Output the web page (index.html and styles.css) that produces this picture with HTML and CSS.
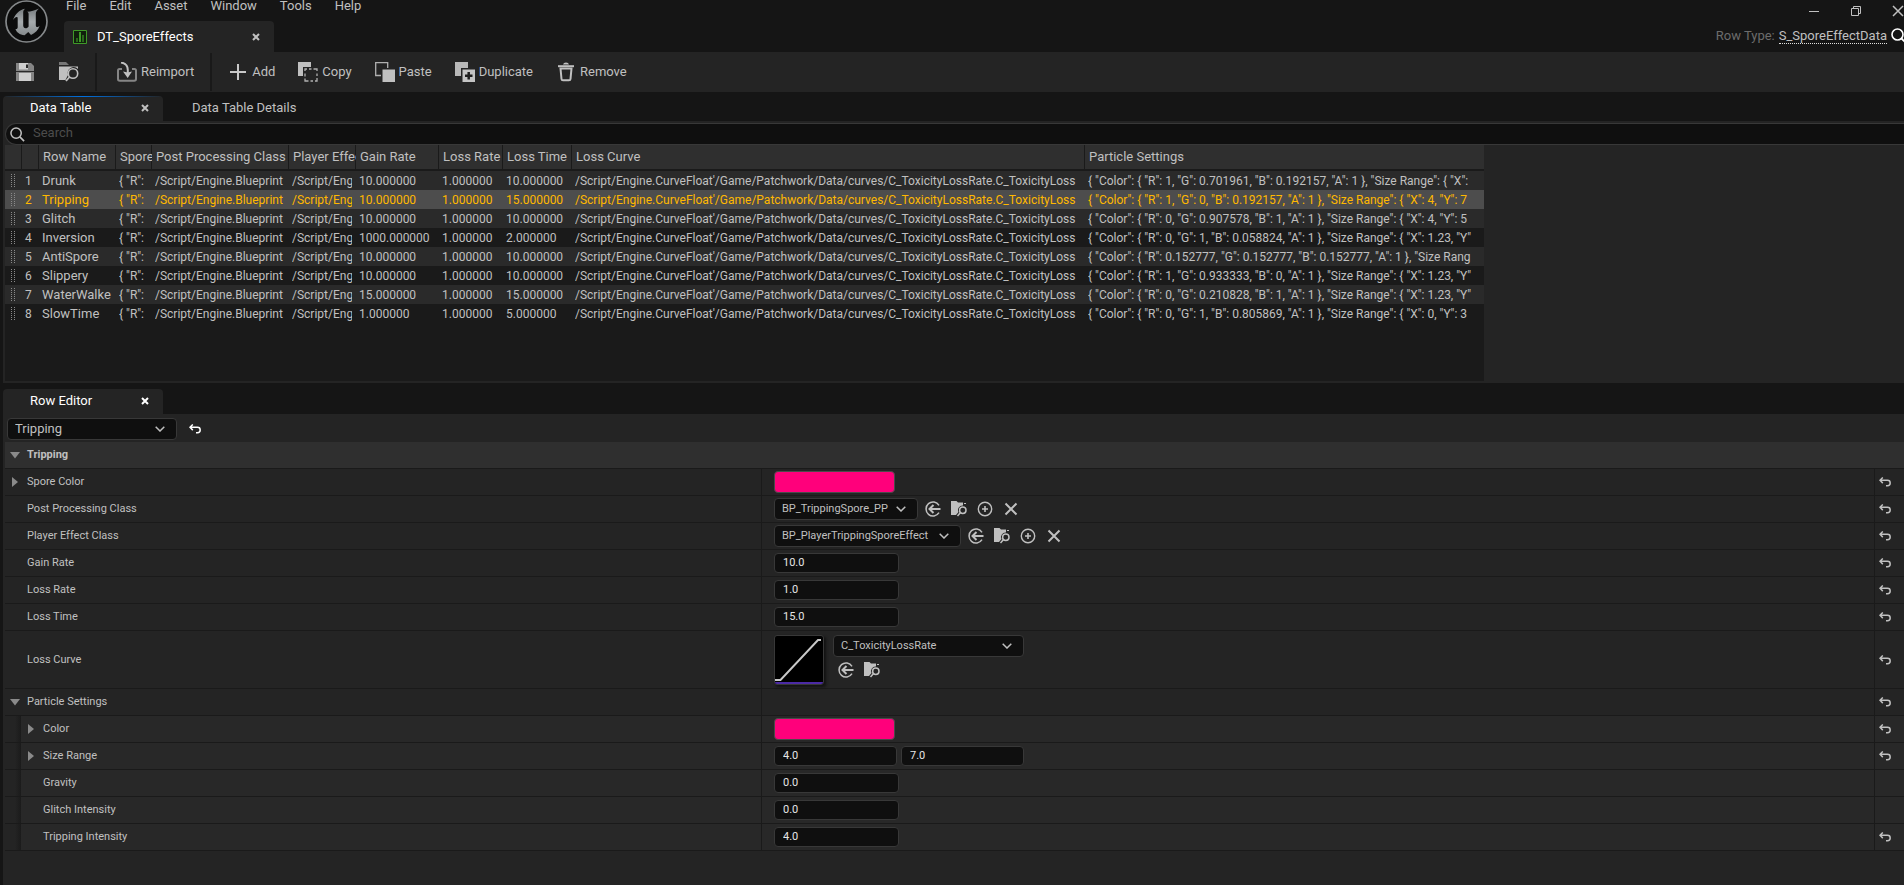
FILE: index.html
```html
<!DOCTYPE html>
<html lang="en">
<head>
<meta charset="utf-8">
<title>DT_SporeEffects</title>
<link rel="stylesheet" href="styles.css">
</head>
<body>
<svg class="sprite" aria-hidden="true">
  <symbol id="i-close" viewBox="0 0 8 8"><path d="M1 1l6 6M7 1l-6 6" fill="none" stroke="currentColor" stroke-width="2"/></symbol>
  <symbol id="i-chevron" viewBox="0 0 10 6"><path d="M.7.7L5 5 9.300.7" fill="none" stroke="currentColor" stroke-width="1.5"/></symbol>
  <symbol id="i-search" viewBox="0 0 16 16"><circle cx="6.500" cy="6.500" r="5.500" fill="none" stroke="currentColor" stroke-width="1.600"/><path d="M10.500 10.500l4.500 4.500" stroke="currentColor" stroke-width="1.800"/></symbol>
  <symbol id="i-reset" viewBox="0 0 12 10"><path d="M3.800.5L1 3.300l2.800 2.800M1.200 3.300H8.500a2.700 2.700 0 0 1 0 5.400H7" fill="none" stroke="currentColor" stroke-width="1.500"/></symbol>
  <symbol id="i-use" viewBox="0 0 16 16"><path d="M14 4.300A7 7 0 1 0 14 11.700" fill="none" stroke="currentColor" stroke-width="1.500"/><path d="M15.500 8H5M8.500 4L4.500 8l4 4" fill="none" stroke="currentColor" stroke-width="2"/></symbol>
  <symbol id="i-browse" viewBox="0 0 16 16"><path d="M0 0h5.500l1.500 1.500H12V4.500A4.500 4.500 0 0 0 7.500 11L5 14H0z" fill="currentColor"/><path d="M13 2h2v1h-2z" fill="currentColor"/><circle cx="11.800" cy="9.300" r="3.200" fill="none" stroke="currentColor" stroke-width="1.500"/><path d="M9.500 11.500L6.500 15" stroke="currentColor" stroke-width="1.500"/></symbol>
  <symbol id="i-new" viewBox="0 0 16 16"><circle cx="8" cy="8" r="6.700" fill="none" stroke="currentColor" stroke-width="1.400"/><path d="M8 5v6M5 8h6" stroke="currentColor" stroke-width="1.600"/></symbol>
  <symbol id="i-clear" viewBox="0 0 16 16"><path d="M2.500 2.500l11 11M13.500 2.500l-11 11" stroke="currentColor" stroke-width="2"/></symbol>
  <symbol id="i-down" viewBox="0 0 10 10"><path d="M0 2h10L5 8.500z" fill="currentColor"/></symbol>
  <symbol id="i-right" viewBox="0 0 10 10"><path d="M2 0l6 5-6 5z" fill="currentColor"/></symbol>
</svg>

<header class="titlebar">
  <svg class="logo" viewBox="0 0 44 44" role="img" aria-label="Unreal Engine">
    <defs><linearGradient id="metal" x1="0" y1="0" x2="0" y2="1"><stop offset="0" stop-color="#777c7f"/><stop offset=".5" stop-color="#a6abad"/><stop offset="1" stop-color="#85898b"/></linearGradient></defs>
    <circle cx="21.500" cy="21.500" r="20.500" fill="#0c0c0c" stroke="#85888a" stroke-width="1.700"/>
    <path d="M8 20C10 14 14 10 20 8.700c-1.400 1.200-1.800 2.400-1.800 4V25.500c0 1.600 1 2.700 2.300 2.700 1.400 0 2.500-.9 3.100-1.800V14c0-1.200-.6-1.800-1.600-2.200C26 11.500 30 10.500 34 8.500c-1.800 1.500-3.200 3-3.200 5.500V25c0 1.500.5 2 1.400 2 .9 0 1.600-.4 2.400-1.300-1.300 4.200-4.300 7.200-8.600 9.300l-2.700-3-3.700 3.300C14.500 34.800 11.300 32 10.500 29c1.200.4 2.200-.3 2.200-2V18.500c0-2.500-2.700-1.500-4.700 1.500z" fill="url(#metal)"/>
  </svg>
  <div class="title-main">
    <nav class="menu">
      <button>File</button><button>Edit</button><button>Asset</button><button>Window</button><button>Tools</button><button>Help</button>
    </nav>
    <div class="asset-tab">
      <svg class="asset-icon" viewBox="0 0 14 14" aria-hidden="true"><path d="M.5.5h13v13H.5z" fill="#10200c" stroke="#3f9a28"/><path d="M3 8h2v4H3zM9 5h2v7H9z" fill="#2a6a1b"/><path d="M6 2h2v10H6z" fill="#3f9a28"/></svg>
      <span class="asset-name">DT_SporeEffects</span>
      <button class="tab-close" aria-label="Close DT_SporeEffects"><svg><use href="#i-close"/></svg></button>
    </div>
  </div>
  <div class="title-side">
    <div class="window-buttons">
      <button aria-label="Minimize"><svg viewBox="0 0 12 12"><path d="M1 6.500h10" stroke="currentColor"/></svg></button>
      <button aria-label="Restore"><svg viewBox="0 0 12 12"><path d="M1.500 3.500h7v7h-7zM3.500 3V1.500h7v7H9" fill="none" stroke="currentColor"/></svg></button>
      <button aria-label="Close"><svg viewBox="0 0 12 12"><path d="M1 1l10 10M11 1L1 11" stroke="currentColor" stroke-width="1.500"/></svg></button>
    </div>
    <div class="row-type">
      <span>Row Type:</span>
      <a href="#row-type">S_SporeEffectData</a>
      <button aria-label="Find row type"><svg><use href="#i-search"/></svg></button>
    </div>
  </div>
</header>

<div class="toolbar">
  <div class="tool-group file-tools">
    <button aria-label="Save"><svg viewBox="0 0 20 20"><path d="M1 1h15l3 3v15H1z" fill="#858585"/><path d="M4 1h9v6.500H4zM4 11h12v8H4z" fill="#cfcfcf"/><path d="M11 2.500h2v3.500h-2zM1 9h18v1H1z" fill="#2b2b2b"/></svg></button>
    <button aria-label="Browse to asset"><svg viewBox="0 0 20 20"><path d="M0 0h7l3 3H0z" fill="#777"/><path d="M0 4.500h19V7A6 6 0 0 0 9 13l-2.500 5H0z" fill="#c0c0c0"/><circle cx="14" cy="11.500" r="4.700" fill="#242424" stroke="#c0c0c0" stroke-width="1.600"/><path d="M10.500 15L7 19" stroke="#c0c0c0" stroke-width="1.800"/></svg></button>
  </div>
  <div class="tool-group import-tools">
    <button><svg viewBox="0 0 20 20"><path d="M5 7H2.500Q1 7 1 8.500v8.500q0 1.800 1.800 1.800h14.400q1.800 0 1.800-1.800V8.500Q19 7 17.500 7H15" fill="none" stroke="#858585" stroke-width="2"/><path d="M4 0.500Q10.800 1.500 10.800 8v5" fill="none" stroke="#c0c0c0" stroke-width="2"/><path d="M6 9.500l4.800 1 4.200-1-4.300 6.500z" fill="#c0c0c0"/></svg>Reimport</button>
  </div>
  <div class="tool-group">
    <button><svg viewBox="0 0 20 20"><path d="M10 2v16M2 10h16" stroke="#c8c8c8" stroke-width="2"/></svg>Add</button>
    <button><svg viewBox="0 0 20 20"><path d="M0 0h13v5H5v9H0z" fill="#c0c0c0"/><path d="M7 9V7h2M11 7h2.500M15.500 7H19v2M19 11.500V14M19 16v3h-2M15 19h-2.500M10.500 19H7v-2.500M7 14.500V11.500" fill="none" stroke="#b0b0b0" stroke-width="1.300"/></svg>Copy</button>
    <button><svg viewBox="0 0 20 20"><path d="M6 13.500H.7V.7h12V6" fill="none" stroke="#b0b0b0" stroke-width="1.300"/><path d="M7.500 7.500H20V20H7.500z" fill="#c0c0c0"/></svg>Paste</button>
    <button><svg viewBox="0 0 20 20"><path d="M0 0h13v6H6v8H0z" fill="#b8b8b8"/><path d="M7.500 7.500H20V20H7.500z" fill="#c4c4c4"/><path d="M13.700 10v7.500M10 13.700h7.500" stroke="#1d1d1d" stroke-width="2.500"/></svg>Duplicate</button>
    <button><svg viewBox="0 0 20 20"><path d="M2 4.200h16" stroke="#c0c0c0" stroke-width="2"/><path d="M7 2.500Q7.500.5 10 .5t3 2z" fill="#c0c0c0"/><path d="M4.500 6.500l1 10.500q.1 1.300 1.500 1.300h6q1.400 0 1.500-1.300l1-10.500z" fill="none" stroke="#c0c0c0" stroke-width="2"/></svg>Remove</button>
  </div>
</div>

<div class="tabs">
  <div class="tab active focused"><span>Data Table</span><button class="tab-close" aria-label="Close Data Table"><svg><use href="#i-close"/></svg></button></div>
  <div class="tab"><span>Data Table Details</span></div>
</div>

<section class="panel table-panel">
  <label class="search"><svg aria-hidden="true"><use href="#i-search"/></svg><input type="search" placeholder="Search" aria-label="Search rows"></label>
  <div class="table-area">
    <table>
      <colgroup><col class="c-grip"><col class="c-num"><col class="c-name"><col class="c-spore"><col class="c-post"><col class="c-player"><col class="c-gain"><col class="c-rate"><col class="c-time"><col class="c-curve"><col class="c-part"></colgroup>
      <thead><tr><th></th><th></th><th>Row Name</th><th>Spore Color</th><th>Post Processing Class</th><th>Player Effect Class</th><th>Gain Rate</th><th>Loss Rate</th><th>Loss Time</th><th>Loss Curve</th><th>Particle Settings</th></tr></thead>
      <tbody>
        <tr><td><i class="grip"></i></td><td>1</td><td class="name">Drunk</td><td><div>{ "R": </div></td><td><div>/Script/Engine.Blueprint</div></td><td><div>/Script/Engine</div></td><td>10.000000</td><td>1.000000</td><td>10.000000</td><td><div>/Script/Engine.CurveFloat'/Game/Patchwork/Data/curves/C_ToxicityLossRate.C_ToxicityLoss</div></td><td><div>{ "Color": { "R": 1, "G": 0.701961, "B": 0.192157, "A": 1 }, "Size Range": { "X":</div></td></tr>
        <tr class="selected"><td><i class="grip"></i></td><td>2</td><td class="name">Tripping</td><td><div>{ "R": </div></td><td><div>/Script/Engine.Blueprint</div></td><td><div>/Script/Engine</div></td><td>10.000000</td><td>1.000000</td><td>15.000000</td><td><div>/Script/Engine.CurveFloat'/Game/Patchwork/Data/curves/C_ToxicityLossRate.C_ToxicityLoss</div></td><td><div>{ "Color": { "R": 1, "G": 0, "B": 0.192157, "A": 1 }, "Size Range": { "X": 4, "Y": 7</div></td></tr>
        <tr><td><i class="grip"></i></td><td>3</td><td class="name">Glitch</td><td><div>{ "R": </div></td><td><div>/Script/Engine.Blueprint</div></td><td><div>/Script/Engine</div></td><td>10.000000</td><td>1.000000</td><td>10.000000</td><td><div>/Script/Engine.CurveFloat'/Game/Patchwork/Data/curves/C_ToxicityLossRate.C_ToxicityLoss</div></td><td><div>{ "Color": { "R": 0, "G": 0.907578, "B": 1, "A": 1 }, "Size Range": { "X": 4, "Y": 5</div></td></tr>
        <tr><td><i class="grip"></i></td><td>4</td><td class="name">Inversion</td><td><div>{ "R": </div></td><td><div>/Script/Engine.Blueprint</div></td><td><div>/Script/Engine</div></td><td>1000.000000</td><td>1.000000</td><td>2.000000</td><td><div>/Script/Engine.CurveFloat'/Game/Patchwork/Data/curves/C_ToxicityLossRate.C_ToxicityLoss</div></td><td><div>{ "Color": { "R": 0, "G": 1, "B": 0.058824, "A": 1 }, "Size Range": { "X": 1.23, "Y"</div></td></tr>
        <tr><td><i class="grip"></i></td><td>5</td><td class="name">AntiSpore</td><td><div>{ "R": </div></td><td><div>/Script/Engine.Blueprint</div></td><td><div>/Script/Engine</div></td><td>10.000000</td><td>1.000000</td><td>10.000000</td><td><div>/Script/Engine.CurveFloat'/Game/Patchwork/Data/curves/C_ToxicityLossRate.C_ToxicityLoss</div></td><td><div>{ "Color": { "R": 0.152777, "G": 0.152777, "B": 0.152777, "A": 1 }, "Size Rang</div></td></tr>
        <tr><td><i class="grip"></i></td><td>6</td><td class="name">Slippery</td><td><div>{ "R": </div></td><td><div>/Script/Engine.Blueprint</div></td><td><div>/Script/Engine</div></td><td>10.000000</td><td>1.000000</td><td>10.000000</td><td><div>/Script/Engine.CurveFloat'/Game/Patchwork/Data/curves/C_ToxicityLossRate.C_ToxicityLoss</div></td><td><div>{ "Color": { "R": 1, "G": 0.933333, "B": 0, "A": 1 }, "Size Range": { "X": 1.23, "Y"</div></td></tr>
        <tr><td><i class="grip"></i></td><td>7</td><td class="name">WaterWalke</td><td><div>{ "R": </div></td><td><div>/Script/Engine.Blueprint</div></td><td><div>/Script/Engine</div></td><td>15.000000</td><td>1.000000</td><td>15.000000</td><td><div>/Script/Engine.CurveFloat'/Game/Patchwork/Data/curves/C_ToxicityLossRate.C_ToxicityLoss</div></td><td><div>{ "Color": { "R": 0, "G": 0.210828, "B": 1, "A": 1 }, "Size Range": { "X": 1.23, "Y"</div></td></tr>
        <tr><td><i class="grip"></i></td><td>8</td><td class="name">SlowTime</td><td><div>{ "R": </div></td><td><div>/Script/Engine.Blueprint</div></td><td><div>/Script/Engine</div></td><td>1.000000</td><td>1.000000</td><td>5.000000</td><td><div>/Script/Engine.CurveFloat'/Game/Patchwork/Data/curves/C_ToxicityLossRate.C_ToxicityLoss</div></td><td><div>{ "Color": { "R": 0, "G": 1, "B": 0.805869, "A": 1 }, "Size Range": { "X": 0, "Y": 3</div></td></tr>
      </tbody>
    </table>
  </div>
</section>

<div class="tabs lower-tabs">
  <div class="tab active"><span>Row Editor</span><button class="tab-close bright" aria-label="Close Row Editor"><svg><use href="#i-close"/></svg></button></div>
</div>

<section class="panel editor-panel">
  <div class="row-picker">
    <div class="combo picker"><select aria-label="Row"><option>Tripping</option></select><svg aria-hidden="true"><use href="#i-chevron"/></svg></div>
    <button class="reset bright" aria-label="Reset row"><svg><use href="#i-reset"/></svg></button>
  </div>
  <div class="category"><button aria-label="Collapse Tripping"><svg class="arrow"><use href="#i-down"/></svg></button><span>Tripping</span></div>

  <div class="prop">
    <div class="label"><button aria-label="Expand Spore Color"><svg class="arrow"><use href="#i-right"/></svg></button><span>Spore Color</span></div>
    <div class="value"><button class="swatch" aria-label="Spore Color"></button></div>
    <div class="tail"><button class="reset" aria-label="Reset Spore Color"><svg><use href="#i-reset"/></svg></button></div>
  </div>
  <div class="prop">
    <label class="label leaf" for="post">Post Processing Class</label>
    <div class="value">
      <div class="combo"><select id="post"><option>BP_TrippingSpore_PP</option></select><svg aria-hidden="true"><use href="#i-chevron"/></svg></div>
      <div class="actions"><button aria-label="Use selected"><svg><use href="#i-use"/></svg></button><button aria-label="Browse"><svg><use href="#i-browse"/></svg></button><button aria-label="New"><svg><use href="#i-new"/></svg></button><button aria-label="Clear"><svg><use href="#i-clear"/></svg></button></div>
    </div>
    <div class="tail"><button class="reset" aria-label="Reset Post Processing Class"><svg><use href="#i-reset"/></svg></button></div>
  </div>
  <div class="prop">
    <label class="label leaf" for="player">Player Effect Class</label>
    <div class="value">
      <div class="combo wide"><select id="player"><option>BP_PlayerTrippingSporeEffect</option></select><svg aria-hidden="true"><use href="#i-chevron"/></svg></div>
      <div class="actions"><button aria-label="Use selected"><svg><use href="#i-use"/></svg></button><button aria-label="Browse"><svg><use href="#i-browse"/></svg></button><button aria-label="New"><svg><use href="#i-new"/></svg></button><button aria-label="Clear"><svg><use href="#i-clear"/></svg></button></div>
    </div>
    <div class="tail"><button class="reset" aria-label="Reset Player Effect Class"><svg><use href="#i-reset"/></svg></button></div>
  </div>
  <div class="prop">
    <label class="label leaf" for="gain">Gain Rate</label>
    <div class="value"><input id="gain" value="10.0"></div>
    <div class="tail"><button class="reset" aria-label="Reset Gain Rate"><svg><use href="#i-reset"/></svg></button></div>
  </div>
  <div class="prop">
    <label class="label leaf" for="rate">Loss Rate</label>
    <div class="value"><input id="rate" value="1.0"></div>
    <div class="tail"><button class="reset" aria-label="Reset Loss Rate"><svg><use href="#i-reset"/></svg></button></div>
  </div>
  <div class="prop">
    <label class="label leaf" for="time">Loss Time</label>
    <div class="value"><input id="time" value="15.0"></div>
    <div class="tail"><button class="reset" aria-label="Reset Loss Time"><svg><use href="#i-reset"/></svg></button></div>
  </div>
  <div class="prop tall">
    <label class="label leaf" for="curve">Loss Curve</label>
    <div class="value">
      <svg class="thumb" viewBox="0 0 48 48" role="img" aria-label="Curve preview"><path d="M0 44h5.500L43 4h3" fill="none" stroke="#c8c8c8" stroke-width="2"/><path d="M0 46h48v2H0z" fill="#4b2aa5"/></svg>
      <div class="asset-pick">
        <div class="combo asset"><select id="curve"><option>C_ToxicityLossRate</option></select><svg aria-hidden="true"><use href="#i-chevron"/></svg></div>
        <div class="actions"><button aria-label="Use selected"><svg><use href="#i-use"/></svg></button><button aria-label="Browse"><svg><use href="#i-browse"/></svg></button></div>
      </div>
    </div>
    <div class="tail"><button class="reset" aria-label="Reset Loss Curve"><svg><use href="#i-reset"/></svg></button></div>
  </div>
  <div class="prop">
    <div class="label"><button aria-label="Collapse Particle Settings"><svg class="arrow"><use href="#i-down"/></svg></button><span>Particle Settings</span></div>
    <div class="value"></div>
    <div class="tail"><button class="reset" aria-label="Reset Particle Settings"><svg><use href="#i-reset"/></svg></button></div>
  </div>
  <div class="prop nested">
    <div class="label"><button aria-label="Expand Color"><svg class="arrow"><use href="#i-right"/></svg></button><span>Color</span></div>
    <div class="value"><button class="swatch" aria-label="Color"></button></div>
    <div class="tail"><button class="reset" aria-label="Reset Color"><svg><use href="#i-reset"/></svg></button></div>
  </div>
  <div class="prop nested">
    <div class="label"><button aria-label="Expand Size Range"><svg class="arrow"><use href="#i-right"/></svg></button><span>Size Range</span></div>
    <div class="value pair"><input aria-label="Size Range X" value="4.0"><input aria-label="Size Range Y" value="7.0"></div>
    <div class="tail"><button class="reset" aria-label="Reset Size Range"><svg><use href="#i-reset"/></svg></button></div>
  </div>
  <div class="prop nested">
    <label class="label leaf" for="gravity">Gravity</label>
    <div class="value"><input id="gravity" value="0.0"></div>
    <div class="tail"></div>
  </div>
  <div class="prop nested">
    <label class="label leaf" for="glitch">Glitch Intensity</label>
    <div class="value"><input id="glitch" value="0.0"></div>
    <div class="tail"></div>
  </div>
  <div class="prop nested">
    <label class="label leaf" for="tripping">Tripping Intensity</label>
    <div class="value"><input id="tripping" value="4.0"></div>
    <div class="tail"><button class="reset" aria-label="Reset Tripping Intensity"><svg><use href="#i-reset"/></svg></button></div>
  </div>
</section>
</body>
</html>
```
FILE: styles.css
```css
* { box-sizing: border-box; }
html, body { height: 100%; }
body {
  margin: 0;
  display: flex;
  flex-direction: column;
  overflow: hidden;
  background: #151515;
  color: #c0c0c0;
  font: 13px/16px Roboto, "Liberation Sans", sans-serif;
}
button, input, select { font: inherit; color: inherit; margin: 0; }
button { padding: 0; border: 0; background: none; }
svg { display: block; flex: none; }
.sprite { position: absolute; width: 0; height: 0; }

/* Title bar */
.titlebar { display: flex; height: 52px; flex: none; }
.logo { width: 44px; height: 44px; margin: 0 15px 0 5px; }
.title-main { display: flex; flex-direction: column; justify-content: space-between; flex: 1; }
.menu { display: flex; gap: 23px; padding-left: 2px; line-height: 12px; }
.asset-tab {
  display: flex; align-items: center;
  width: 210px; height: 31px; padding: 0 14px 0 9px;
  background: #242424; border-radius: 4px 4px 0 0; color: #fff;
}
.asset-icon { width: 14px; height: 14px; margin-right: 10px; }
.asset-name { flex: 1; }
.tab-close { color: #c0c0c0; }
.tab-close.bright { color: #fff; }
.tab-close svg { width: 8px; height: 8px; }
.title-side { display: flex; flex-direction: column; gap: 11px; }
.window-buttons { display: flex; justify-content: flex-end; gap: 30px; height: 17px; padding-top: 5px; }
.window-buttons svg { width: 12px; height: 12px; }
.row-type { display: flex; align-items: center; gap: 4px; color: #6c6c6c; }
.row-type a { color: #c0c0c0; text-decoration: none; line-height: 14px; border-bottom: 1px dotted #e0e0e0; }
.row-type button { width: 13px; overflow: hidden; color: #fff; }
.row-type button svg { width: 16px; height: 16px; }

/* Toolbar */
.toolbar { display: flex; height: 40px; flex: none; padding: 1px 0; background: #242424; }
.tool-group { display: flex; align-items: center; gap: 23px; padding: 0 16px; }
.tool-group + .tool-group { border-left: 2px solid #191919; }
.tool-group.file-tools { gap: 24px; padding-left: 15px; }
.tool-group.import-tools { padding-left: 20px; }
.tool-group button { display: flex; align-items: center; gap: 4px; }
.tool-group svg { width: 20px; height: 20px; }

/* Tab strips */
.tabs { display: flex; flex: none; height: 29px; padding: 4px 0 0 3px; }
.tab { display: flex; align-items: center; padding: 0 14px 2px 29px; }
.tab.active {
  justify-content: space-between;
  width: 160px; padding-left: 27px;
  background: #242424; border-radius: 4px 4px 0 0; color: #fff;
}
.tab.focused {
  background: linear-gradient(90deg, #242424, #0070e0 50%, #242424) top / 100% 1px no-repeat #242424;
}
.lower-tabs { height: 31px; padding-top: 6px; }
.panel { margin-left: 3px; padding: 0 0 0 2px; background: #242424; }

/* Data table */
.table-panel { flex: none; padding-top: 2px; padding-bottom: 2px; }
.search {
  display: flex; align-items: center; gap: 8px;
  height: 22px; padding-left: 4px;
  border: 1px solid #383838; border-right: 0; border-radius: 11px 0 0 11px;
  background: #0f0f0f;
}
.search svg { width: 15px; height: 15px; }
.search input { flex: 1; padding: 0 0 2px; border: 0; outline: 0; background: none; appearance: none; }
.search input::placeholder { color: #4c4c4c; }
.table-area { width: 1479px; height: 236px; background: #1a1a1a; }
table { table-layout: fixed; width: 100%; border-collapse: separate; border-spacing: 0; }
.c-grip, .c-num { width: 17px; }
.c-name { width: 77px; }
.c-spore { width: 36px; }
.c-post { width: 137px; }
.c-player { width: 67px; }
.c-gain { width: 83px; }
.c-rate { width: 64px; }
.c-time { width: 69px; }
.c-curve { width: 513px; }
th {
  height: 26px; padding: 0 0 1px 4px;
  border-bottom: 2px solid #1a1a1a;
  background: linear-gradient(#1a1a1a, #1a1a1a) right / 1px 100% no-repeat #2f2f2f;
  font-weight: 400; text-align: left; white-space: nowrap; overflow: hidden;
}
th:last-child { background: #2f2f2f; }
td { height: 19px; padding: 0 4px 0 3px; font-size: 12px; line-height: 18px; white-space: nowrap; }
td:first-child { padding: 0 0 0 6px; }
td.name { padding-right: 0; font-size: 13px; line-height: 19px; }
td div { overflow: hidden; height: 18px; }
tbody tr:nth-child(odd) { background: #2a2a2a; }
tbody tr.selected { background: #4d4d4d; color: #ffb800; }
.grip {
  display: block; width: 4px; height: 15px;
  background: repeating-linear-gradient(transparent 0 1px, #8a8a8a 1px 2px);
  mask: linear-gradient(90deg, #000 1px, transparent 1px 3px, #000 3px);
}

/* Row editor */
.editor-panel { flex: 1; font-size: 11px; }
.row-picker { display: flex; align-items: center; gap: 12px; height: 28px; padding-left: 2px; padding-top: 2px; }
.combo { display: grid; align-items: center; width: 144px; height: 22px; }
.combo select, .combo svg { grid-area: 1 / 1; }
.combo select {
  width: 100%; height: 100%; padding: 0 7px;
  border: 1px solid #383838; border-radius: 4px; outline: 0;
  background: #0f0f0f; appearance: none;
}
.combo svg { width: 10px; height: 6px; justify-self: end; margin-right: 12px; pointer-events: none; }
.combo.wide { width: 187px; }
.combo.asset { width: 191px; }
.combo.picker { width: 170px; font-size: 13px; }
.reset svg { width: 12px; height: 10px; }
.reset.bright { color: #fff; }
.category {
  display: flex; align-items: center; gap: 7px;
  height: 27px; padding-left: 5px;
  border-bottom: 1px solid #1a1a1a; background: #2f2f2f; font-weight: 700;
}
.arrow { width: 10px; height: 10px; color: #8a8a8a; }
.prop {
  display: grid; grid-template-columns: 756fr 1113fr 30px;
  height: 27px; border-bottom: 1px solid #1a1a1a;
}
.prop.tall { height: 58px; }
.label { display: flex; align-items: center; gap: 7px; padding-left: 5px; padding-bottom: 1px; }
.label.leaf { padding-left: 22px; }
.tall .label { padding-bottom: 0; }
.value, .tail { display: flex; align-items: center; border-left: 1px solid #1a1a1a; }
.value { gap: 7px; padding-left: 12px; }
.tail { padding-left: 4px; }
.value input {
  width: 125px; height: 20px; padding: 0 8px 2px;
  border: 1px solid #383838; border-radius: 4px; outline: 0;
  background: #0f0f0f; color: #e6e6e6;
}
.tall .value { gap: 9px; }
.value.pair { gap: 4px; }
.value.pair input { width: 123px; }
.swatch { width: 121px; height: 22px; border: 1px solid #4a4a4a; border-radius: 4px; background: #ff007b; }
.actions { display: flex; align-items: center; gap: 10px; }
.actions svg { width: 16px; height: 16px; }
.thumb { width: 50px; height: 50px; border: 1px solid #383838; border-radius: 3px; background: #000; box-shadow: 2px 2px 3px #111; }
.asset-pick { display: flex; flex-direction: column; gap: 5px; margin-bottom: 6px; }
.asset-pick .actions { padding-left: 5px; }
.nested { background: linear-gradient(90deg, #242424 10px, #1b1b1b 16px, #282828 16px); }
.nested .label { padding-left: 21px; }
.nested .label.leaf { padding-left: 38px; }
```
